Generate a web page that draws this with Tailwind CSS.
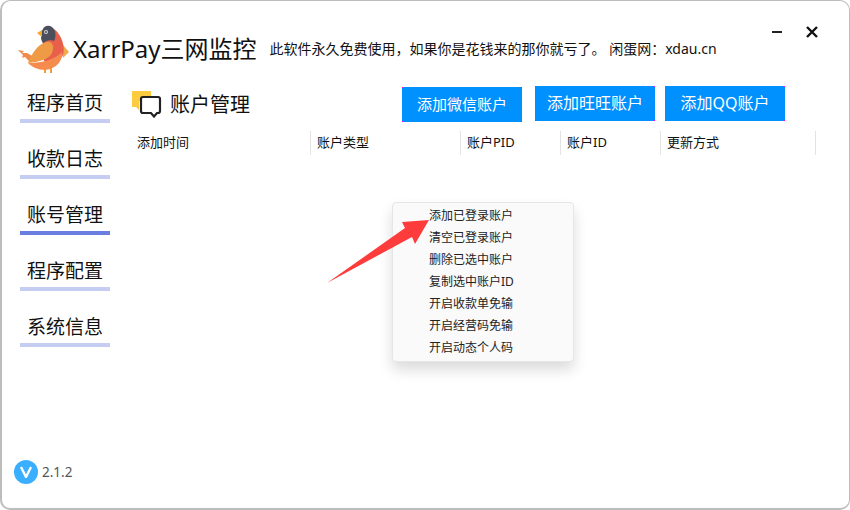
<!doctype html>
<html lang="zh"><head><meta charset="utf-8"><script src="https://cdn.jsdelivr.net/npm/@tailwindcss/browser@4"></script></head>
<body class="bg-white overflow-hidden">
<div class="relative w-[850px] h-[510px] overflow-hidden rounded-[10px] border border-l-2 border-b-2 border-[#bdbdbd] bg-white text-[#111] font-['Noto_Sans','Noto_Sans_CJK_SC',sans-serif]">
  <header class="flex items-center h-[75px] pl-[16px] pr-[31px] pt-[21px]">
    <svg class="w-[52px] h-[48px] shrink-0" viewBox="0 0 52 48">
      <path d="M0 25 L6 26 L4 28 L9 28 L16 32 L13 38 L7 32 L4 33 L5 30 Z" fill="#f0894a"/>
      <path d="M27 43v5M33 43v5" stroke="#f59a3c" stroke-width="2"/>
      <path d="M45 20 L51 27 L45 33Z" fill="#f1a94e"/>
      <path d="M24 6 C30 0 38 4 40 8 C45 14 47 24 45 30 C42 38 30 40 26 36 Z" fill="#e8604c"/>
      <path d="M10 38 C20 38 36 36 44 27 C45 36 38 44 27 45 C20 45 14 42 10 38Z" fill="#f58b4d"/>
      <path d="M10 38 C14 28 20 20 26 18 C31 15 36 18 35 24 C34 32 28 36 10 38Z" fill="#ef9b45"/>
      <path d="M24 6 C26 -1 34 -1 37 6 C38 11 37 14 36 16 C31 14 27 17 25 18 C22 14 23 10 24 6Z" fill="#4b4f5b"/>
      <circle cx="28" cy="7" r="2" fill="#d5d5d5"/><circle cx="28" cy="7" r="1" fill="#4b4f5b"/>
      <path d="M19 8 L24 5 L24 12Z" fill="#f5a623"/>
    </svg>
    <div class="ml-[3px] text-[24px] leading-none whitespace-nowrap">XarrPay三网监控</div>
    <div class="ml-[13px] text-[14px] leading-none whitespace-nowrap">此软件永久免费使用，如果你是花钱来的那你就亏了。 闲蛋网：xdau.cn</div>
    <div class="ml-auto self-start mt-[4px] flex items-center gap-[24px]">
      <span class="block w-[10px] h-[2px] bg-[#222]"></span>
      <svg class="w-[12px] h-[12px]" viewBox="0 0 12 12"><path d="M1 1L11 11M11 1L1 11" stroke="#111" stroke-width="2.400"/></svg>
    </div>
  </header>
  <div class="flex">
    <nav class="ml-[18px] mt-[7px] w-[90px] flex flex-col gap-[16px] text-[19px] shrink-0">
      <a class="h-[40px] flex items-start justify-center pt-[7px] leading-[26px] border-b-4 border-[#c5cdf2]">程序首页</a>
      <a class="h-[40px] flex items-start justify-center pt-[7px] leading-[26px] border-b-4 border-[#c5cdf2]">收款日志</a>
      <a class="h-[40px] flex items-start justify-center pt-[7px] leading-[26px] border-b-4 border-[#6a7de0]">账号管理</a>
      <a class="h-[40px] flex items-start justify-center pt-[7px] leading-[26px] border-b-4 border-[#c5cdf2]">程序配置</a>
      <a class="h-[40px] flex items-start justify-center pt-[7px] leading-[26px] border-b-4 border-[#c5cdf2]">系统信息</a>
    </nav>
    <main class="ml-[21px] pt-[4px] flex-1">
      <div class="flex items-center h-[46px]">
        <svg class="w-[32px] h-[28px] mt-[2px] shrink-0" viewBox="0 0 32 28">
          <path d="M1 1h19v10H8v9l-3-3H1Z" fill="#fdcb3f"/>
          <path d="M12 7h15a2 2 0 0 1 2 2v12a2 2 0 0 1-2 2h-1l-3 3.500-3-3.500h-8a2 2 0 0 1-2-2V9a2 2 0 0 1 2-2Z" fill="#fff" stroke="#222" stroke-width="2.200"/>
        </svg>
        <h1 class="ml-[7px] mt-[4px] text-[20px] leading-none font-normal">账户管理</h1>
        <div class="ml-auto mr-[64px] flex items-center">
          <button class="relative w-[120px] h-[35px] mt-[2px] bg-[#0091ff] text-white text-[15px]">添加微信账户<span class="absolute left-0 top-0 size-px bg-[#f0f]"></span><span class="absolute right-0 top-0 size-px bg-[#f0f]"></span><span class="absolute left-0 bottom-0 size-px bg-[#f0f]"></span><span class="absolute right-0 bottom-0 size-px bg-[#f0f]"></span></button>
          <button class="relative ml-[13px] w-[120px] h-[35px] bg-[#0091ff] text-white text-[16px]">添加旺旺账户<span class="absolute left-0 top-0 size-px bg-[#f0f]"></span><span class="absolute right-0 top-0 size-px bg-[#f0f]"></span><span class="absolute left-0 bottom-0 size-px bg-[#f0f]"></span><span class="absolute right-0 bottom-0 size-px bg-[#f0f]"></span></button>
          <button class="relative ml-[10px] w-[120px] h-[35px] bg-[#0091ff] text-white text-[16px]">添加QQ账户<span class="absolute left-0 top-0 size-px bg-[#f0f]"></span><span class="absolute right-0 top-0 size-px bg-[#f0f]"></span><span class="absolute left-0 bottom-0 size-px bg-[#f0f]"></span><span class="absolute right-0 bottom-0 size-px bg-[#f0f]"></span></button>
        </div>
      </div>
      <div class="flex mt-[5px] h-[24px] text-[13px] leading-[23px] w-[685px]">
        <div class="w-[180px] pl-[6px] border-r border-[#e3e3e3]">添加时间</div>
        <div class="w-[150px] pl-[6px] border-r border-[#e3e3e3]">账户类型</div>
        <div class="w-[100px] pl-[6px] border-r border-[#e3e3e3]">账户PID</div>
        <div class="w-[100px] pl-[6px] border-r border-[#e3e3e3]">账户ID</div>
        <div class="w-[155px] pl-[6px] border-r border-[#e3e3e3]">更新方式</div>
      </div>
    </main>
  </div>
  <div class="absolute left-[390px] top-[201px] w-[182px] h-[160px] rounded-[4px] border border-[#e6e6e6] bg-[#fafafa] shadow-[0_8px_14px_rgba(0,0,0,0.14)] pt-[2px] pl-[36px] text-[12px] leading-[22px] text-[#222]">
    <div>添加已登录账户</div><div>清空已登录账户</div><div>删除已选中账户</div><div>复制选中账户ID</div><div>开启收款单免输</div><div>开启经营码免输</div><div>开启动态个人码</div>
  </div>
  <svg class="absolute left-[324px] top-[217px] w-[104px] h-[68px]" viewBox="0 0 104 68">
    <path d="M1 65 L79 10 L76 4 L103 2 L89 26 L86 19 Z" fill="#ff3c3c"/>
  </svg>
  <div class="absolute left-[12px] top-[459px] flex items-center">
    <span class="w-[24px] h-[24px] rounded-full bg-[#3aaeff] flex items-center justify-center">
      <svg class="w-[14px] h-[12px]" viewBox="0 0 14 12"><path d="M2 1L7 11L12 1" fill="none" stroke="#fff" stroke-width="2.400"/></svg>
    </span>
    <span class="ml-[4px] text-[13.500px] text-[#555]">2.1.2</span>
  </div>
</div>
</body></html>
